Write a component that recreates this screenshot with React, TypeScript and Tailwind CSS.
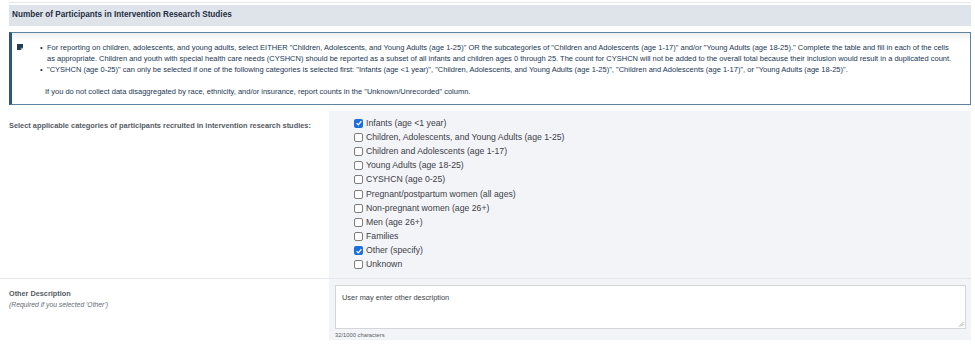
import React from "react";

const CATEGORIES = [
  { label: "Infants (age <1 year)", checked: true },
  { label: "Children, Adolescents, and Young Adults (age 1-25)", checked: false },
  { label: "Children and Adolescents (age 1-17)", checked: false },
  { label: "Young Adults (age 18-25)", checked: false },
  { label: "CYSHCN (age 0-25)", checked: false },
  { label: "Pregnant/postpartum women (all ages)", checked: false },
  { label: "Non-pregnant women (age 26+)", checked: false },
  { label: "Men (age 26+)", checked: false },
  { label: "Families", checked: false },
  { label: "Other (specify)", checked: true },
  { label: "Unknown", checked: false },
];

function Checkbox({ checked }: { checked: boolean }) {
  if (checked) {
    return (
      <span className="flex h-[9px] w-[9px] shrink-0 items-center justify-center rounded-[2px] bg-[#1a6fdc]">
        <svg viewBox="0 0 10 10" className="h-[8px] w-[8px]">
          <path d="M2 5.2 L4.1 7.3 L8 2.8" fill="none" stroke="white" strokeWidth="1.6" />
        </svg>
      </span>
    );
  }
  return <span className="h-[9px] w-[9px] shrink-0 rounded-[2px] border border-[#7d7d7d] bg-white" />;
}

function NoteIcon() {
  return (
    <svg viewBox="0 0 8 8" className="mt-[2px] h-[6px] w-[6px] shrink-0">
      <path d="M0 0 H8 V5 L5 8 H0 Z" fill="#233b55" />
      <path d="M5 8 V5 H8" fill="#8aa0b5" />
    </svg>
  );
}

export default function App() {
  return (
    <div className="w-[975px] h-[344px] overflow-hidden bg-white font-['Liberation_Sans',Arial,sans-serif]">
      <div className="mx-[9px] mr-[4px] h-[3px] border-b border-[#e4e6ea]" />

      <div className="ml-[9px] mr-[4px] mt-[2px] flex h-[21px] items-center bg-[#dfe3ea] pl-[3px]">
        <h2 className="text-[8.2px] font-bold text-[#1f2f44]">
          Number of Participants in Intervention Research Studies
        </h2>
      </div>

      <div className="ml-[9px] mr-[4px] mt-[6px] h-[73px] border border-l-[3px] border-[#5d83a0] border-l-[#2c5878] bg-gradient-to-b from-[#eceef0] to-white to-[12%] pl-[5px] pt-[9px] text-[7.5px] leading-[11px] text-[#1b3754]">
        <div className="flex">
          <NoteIcon />
          <ul className="ml-[21px] mr-[14px]">
            <li className="relative pl-[3px] before:absolute before:-left-[4px] before:content-['•']">
              For reporting on children, adolescents, and young adults, select EITHER "Children, Adolescents, and Young Adults (age 1-25)" OR the subcategories of "Children and Adolescents (age 1-17)" and/or "Young Adults (age 18-25)." Complete the table and fill in each of the cells as appropriate. Children and youth with special health care needs (CYSHCN) should be reported as a subset of all infants and children ages 0 through 25. The count for CYSHCN will not be added to the overall total because their inclusion would result in a duplicated count.
            </li>
            <li className="relative pl-[3px] before:absolute before:-left-[4px] before:content-['•']">
              "CYSHCN (age 0-25)" can only be selected if one of the following categories is selected first: "Infants (age &lt;1 year)", "Children, Adolescents, and Young Adults (age 1-25)", "Children and Adolescents (age 1-17)", or "Young Adults (age 18-25)".
            </li>
          </ul>
        </div>
        <p className="ml-[28px] mt-[11px]">
          If you do not collect data disaggregated by race, ethnicity, and/or insurance, report counts in the "Unknown/Unrecorded" column.
        </p>
      </div>

      <div className="mt-[6px] mr-[4px] flex border-b border-[#e3e6ea]">
        <div className="w-[329px] pl-[9px] pt-[9px] text-[7.4px] font-bold text-[#555b63]">
          Select applicable categories of participants recruited in intervention research studies:
        </div>
        <div className="flex-1 bg-[#f3f4f8] pb-[6px] pl-[25px] pt-[5px]">
          {CATEGORIES.map((c) => (
            <div key={c.label} className="flex h-[14.2px] items-center gap-[3px]">
              <Checkbox checked={c.checked} />
              <span className="text-[8.7px] text-[#3d4147]">{c.label}</span>
            </div>
          ))}
        </div>
      </div>

      <div className="mr-[4px] flex">
        <div className="w-[329px] pl-[9px] pt-[9px]">
          <div className="text-[7.3px] font-bold leading-[11px] text-[#555b63]">Other Description</div>
          <div className="text-[6.8px] italic leading-[12px] text-[#666b72]">(Required if you selected 'Other')</div>
        </div>
        <div className="flex-1 bg-[#f3f4f8] pl-[6px] pr-[5px] pt-[6px]">
          <div className="relative h-[44px] border border-[#d3d5d9] bg-white px-[6px] pt-[6px] text-[7.4px] text-[#3a3f46]">
            User may enter other description
            <svg viewBox="0 0 6 6" className="absolute bottom-[1px] right-[1px] h-[6px] w-[6px]">
              <path d="M1 5.5 L5.5 1 M3 5.5 L5.5 3" stroke="#9a9a9a" strokeWidth="0.8" />
            </svg>
          </div>
          <div className="mt-[2px] text-[5.8px] text-[#5a5f66]">32/1000 characters</div>
        </div>
      </div>
    </div>
  );
}
